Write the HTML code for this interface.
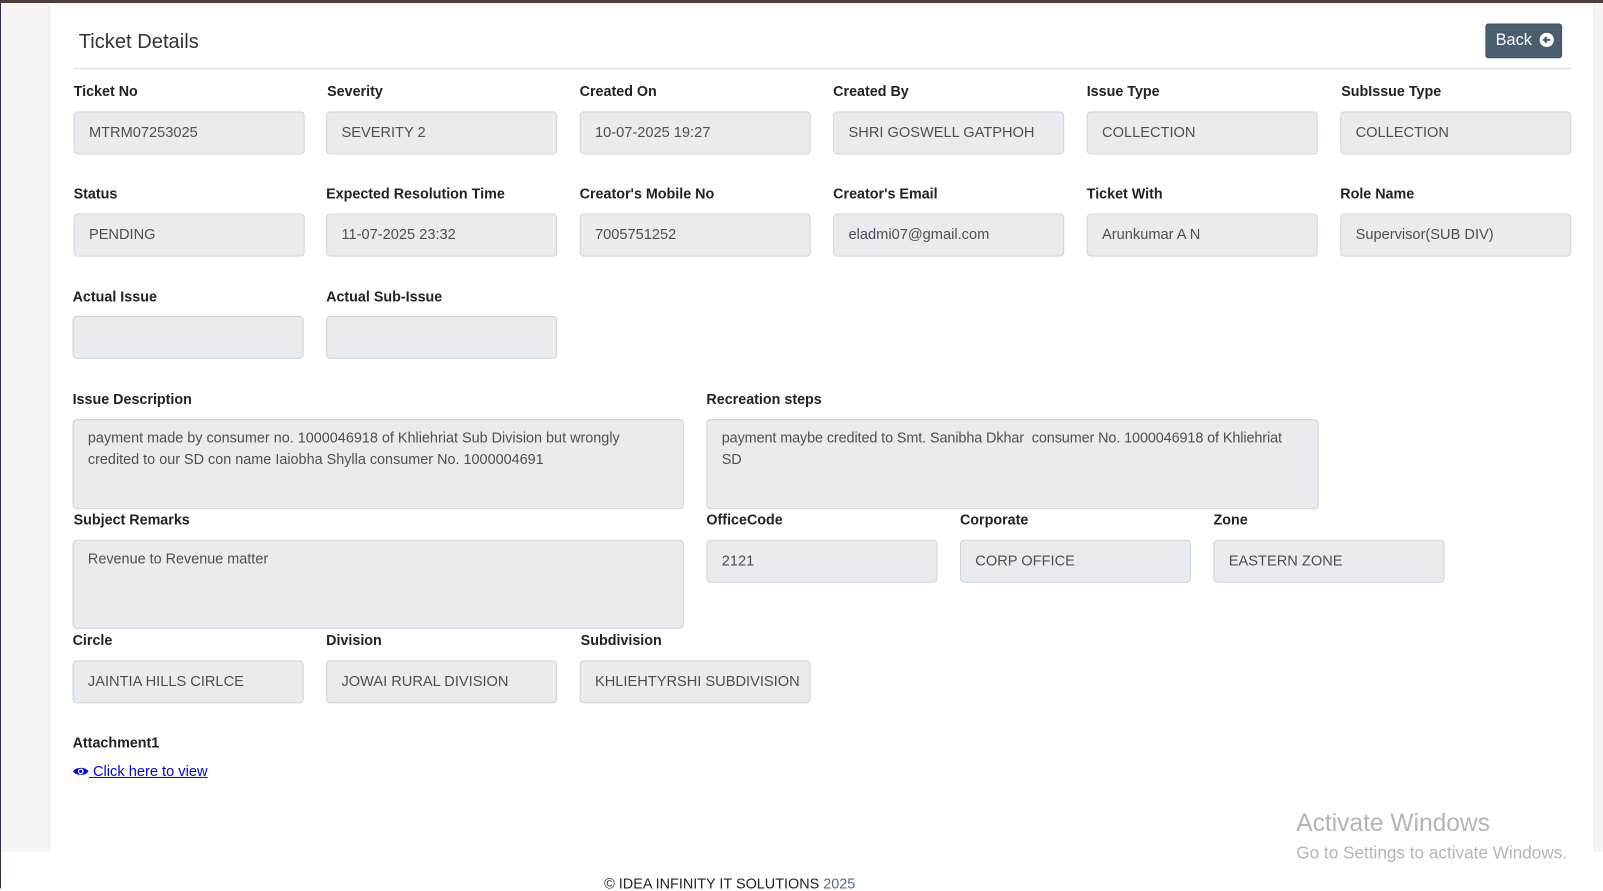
<!DOCTYPE html>
<html><head><meta charset="utf-8"><style>
*{box-sizing:border-box;margin:0;padding:0}
html,body{width:1603px;height:888px;overflow:hidden;background:#fff;font-family:"Liberation Sans",sans-serif}
#w{position:absolute;left:0;top:0;width:1568px;height:869px;transform:scale(1.0223);transform-origin:0 0}
.a{position:absolute}
.lab{position:absolute;font-weight:bold;font-size:14px;color:#222}
.in{position:absolute;width:226px;height:42px;background:#e9ecef;border:1px solid #ced4da;border-radius:4px;font-size:14.3px;color:#495057;padding:0 14px;line-height:41px;white-space:nowrap;overflow:hidden}
.ta{position:absolute;background:#e9ecef;border:1px solid #ced4da;border-radius:4px;font-size:14.1px;color:#495057;padding:7px 14px;line-height:21px}
</style></head><body><div id="w">
<div class="a" style="left:0;top:0;width:1568px;height:3px;background:#4a3f3a"></div>
<div class="a" style="left:0;top:3px;width:1px;height:866px;background:#2b3140"></div>
<div class="a" style="left:1px;top:3px;width:1567px;height:830px;background:#f5f5f5"></div>
<div class="a" style="left:48px;top:5px;width:1512px;height:828px;background:#fff;border-left:1px solid #e8e8e8;border-right:1px solid #e8e8e8"></div>
<div class="a" style="left:77px;top:30px;font-size:19.7px;color:#333">Ticket Details</div>
<div class="a" style="left:72px;top:66px;width:1465px;height:2px;background:#e6e8eb"></div>
<div class="a" style="left:1453px;top:23px;width:75px;height:34px;background:#4a5e70;border:1px solid #3c4d5c;border-radius:3px;color:#fff;font-size:16px;line-height:32px;padding-left:9px">Back <svg width="14" height="14" viewBox="0 0 14 14" style="vertical-align:-2px;margin-left:3px"><circle cx="7" cy="7" r="7" fill="#fff"/><path d="M10.5 7H4.5M7 4.3L4.3 7L7 9.7" stroke="#4a5e70" stroke-width="2" fill="none"/></svg></div>

<div class="lab" style="left:72px;top:81px">Ticket No</div><div class="in" style="left:72px;top:109px">MTRM07253025</div>
<div class="lab" style="left:320px;top:81px">Severity</div><div class="in" style="left:319px;top:109px">SEVERITY 2</div>
<div class="lab" style="left:567px;top:81px">Created On</div><div class="in" style="left:567px;top:109px">10-07-2025 19:27</div>
<div class="lab" style="left:815px;top:81px">Created By</div><div class="in" style="left:815px;top:109px">SHRI GOSWELL GATPHOH</div>
<div class="lab" style="left:1063px;top:81px">Issue Type</div><div class="in" style="left:1063px;top:109px">COLLECTION</div>
<div class="lab" style="left:1312px;top:81px">SubIssue Type</div><div class="in" style="left:1311px;top:109px">COLLECTION</div>

<div class="lab" style="left:72px;top:181px">Status</div><div class="in" style="left:72px;top:209px">PENDING</div>
<div class="lab" style="left:319px;top:181px">Expected Resolution Time</div><div class="in" style="left:319px;top:209px">11-07-2025 23:32</div>
<div class="lab" style="left:567px;top:181px">Creator's Mobile No</div><div class="in" style="left:567px;top:209px">7005751252</div>
<div class="lab" style="left:815px;top:181px">Creator's Email</div><div class="in" style="left:815px;top:209px">eladmi07@gmail.com</div>
<div class="lab" style="left:1063px;top:181px">Ticket With</div><div class="in" style="left:1063px;top:209px">Arunkumar A N</div>
<div class="lab" style="left:1311px;top:181px">Role Name</div><div class="in" style="left:1311px;top:209px">Supervisor(SUB DIV)</div>

<div class="lab" style="left:71px;top:282px">Actual Issue</div><div class="in" style="left:71px;top:309px"></div>
<div class="lab" style="left:319px;top:282px">Actual Sub-Issue</div><div class="in" style="left:319px;top:309px"></div>

<div class="lab" style="left:71px;top:382px">Issue Description</div>
<div class="ta" style="left:71px;top:410px;width:598px;height:88px">payment made by consumer no. 1000046918 of Khliehriat Sub Division but wrongly credited to our SD con name Iaiobha Shylla consumer No. 1000004691</div>
<div class="lab" style="left:691px;top:382px">Recreation steps</div>
<div class="ta" style="left:691px;top:410px;width:599px;height:88px;letter-spacing:-0.1px">payment maybe credited to Smt. Sanibha Dkhar&nbsp; consumer No. 1000046918 of Khliehriat SD</div>

<div class="lab" style="left:72px;top:500px">Subject Remarks</div>
<div class="ta" style="left:71px;top:528px;width:598px;height:87px">Revenue to Revenue matter</div>
<div class="lab" style="left:691px;top:500px">OfficeCode</div><div class="in" style="left:691px;top:528px">2121</div>
<div class="lab" style="left:939px;top:500px">Corporate</div><div class="in" style="left:939px;top:528px">CORP OFFICE</div>
<div class="lab" style="left:1187px;top:500px">Zone</div><div class="in" style="left:1187px;top:528px">EASTERN ZONE</div>

<div class="lab" style="left:71px;top:618px">Circle</div><div class="in" style="left:71px;top:646px">JAINTIA HILLS CIRLCE</div>
<div class="lab" style="left:319px;top:618px">Division</div><div class="in" style="left:319px;top:646px">JOWAI RURAL DIVISION</div>
<div class="lab" style="left:568px;top:618px">Subdivision</div><div class="in" style="left:567px;top:646px">KHLIEHTYRSHI SUBDIVISION</div>

<div class="lab" style="left:71px;top:718px">Attachment1</div>
<div class="a" style="left:71px;top:747px;font-size:14.3px;color:#00e"><svg width="16" height="11" viewBox="0 0 16 11" style="vertical-align:-1px"><path d="M0.5 5.5C3 1 13 1 15.5 5.5C13 10 3 10 0.5 5.5Z" fill="#00e"/><circle cx="8" cy="5.5" r="2.8" fill="#fff"/><circle cx="8" cy="5.5" r="1.6" fill="#00e"/></svg><span style="text-decoration:underline"> Click here to view</span></div>

<div class="a" style="left:1268px;top:792px;font-size:24px;color:#b5b5b5">Activate Windows</div>
<div class="a" style="left:1268px;top:825px;font-size:16.8px;color:#b5b5b5">Go to Settings to activate Windows.</div>
<div class="a" style="left:591px;top:856px;font-size:14.1px;color:#222">© IDEA INFINITY IT SOLUTIONS <span style="color:#5a6b85">2025</span></div>
</div></body></html>
